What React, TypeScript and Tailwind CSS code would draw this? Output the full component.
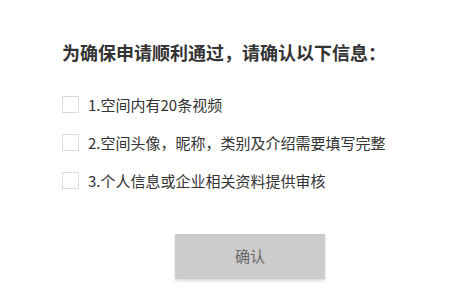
import { useState } from 'react';

const items = [
  '1.空间内有20条视频',
  '2.空间头像，昵称，类别及介绍需要填写完整',
  '3.个人信息或企业相关资料提供审核',
];

export default function App() {
  const [checked, setChecked] = useState<boolean[]>([false, false, false]);

  return (
    <div className="h-[300px] w-[460px] bg-white pl-[62px] pr-[22px] pt-[40px] font-['Noto_Sans_CJK_SC',sans-serif] text-[#333]">
      <h2 className="text-[18px] font-bold leading-[24px]">为确保申请顺利通过，请确认以下信息：</h2>

      <ul className="mt-[32px] flex flex-col gap-[21px]">
        {items.map((text, i) => (
          <li key={text} className="flex h-[17px] items-center gap-[9px]">
            <button
              type="button"
              onClick={() => setChecked((prev) => prev.map((v, j) => (j === i ? !v : v)))}
              className="h-[17px] w-[17px] shrink-0 border border-[#dcdcdc] bg-white"
            >
              {checked[i] ? <span className="block h-full w-full bg-[#ccc]" /> : null}
            </button>
            <span className="text-[15px] leading-[17px]">{text}</span>
          </li>
        ))}
      </ul>

      <button
        type="button"
        className="mx-auto mt-[45px] flex h-[45px] w-[150px] items-center justify-center bg-[#cccccc] text-[15px] text-[#666] shadow-[0_2px_3px_rgba(0,0,0,0.15)]"
      >
        确认
      </button>
    </div>
  );
}
